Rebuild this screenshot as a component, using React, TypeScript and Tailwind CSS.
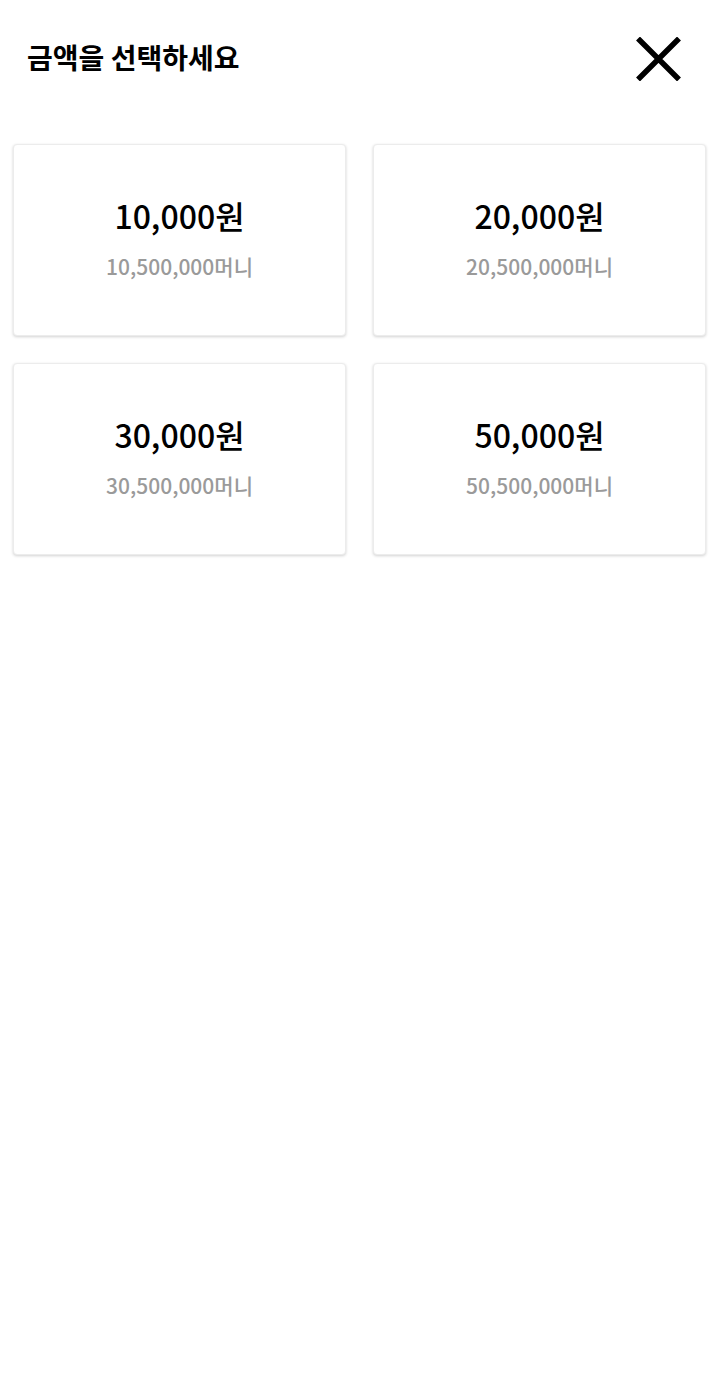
const options = [
  { won: '10,000', money: '10,500,000' },
  { won: '20,000', money: '20,500,000' },
  { won: '30,000', money: '30,500,000' },
  { won: '50,000', money: '50,500,000' },
]

export default function App() {
  return (
    <div
      className="min-h-screen w-full bg-white"
      style={{ fontFamily: '"Noto Sans CJK KR", "Noto Sans", sans-serif' }}
    >
      {/* Header */}
      <div className="flex h-[116px] items-center justify-between pl-[27px] pr-[34px] pb-[2px]">
        <h1 className="text-[28px] font-semibold leading-none text-black">
          금액을 선택하세요
        </h1>
        <button className="mt-[4px] flex items-center justify-center">
          <svg width="45" height="44" viewBox="0 0 45 44">
            <path d="M2 1.5 L43 42.5 M43 1.5 L2 42.5" stroke="black" strokeWidth="5.5" fill="none" />
          </svg>
        </button>
      </div>

      {/* Amount grid */}
      <div className="grid grid-cols-[333px_333px] gap-[27px] pl-[13px] pt-[28px]">
        {options.map((o) => (
          <button
            key={o.won}
            className="flex h-[192px] flex-col items-center justify-center rounded-[4px] border border-[#ececec] bg-white shadow-[0_1px_3px_rgba(0,0,0,0.18)]"
          >
            <span className="-mt-[5px] text-[32px] font-medium leading-none text-black">
              {o.won}원
            </span>
            <span className="mt-[25px] text-[21px] font-medium leading-none text-[#9a9a9a]">
              {o.money}머니
            </span>
          </button>
        ))}
      </div>
    </div>
  )
}
